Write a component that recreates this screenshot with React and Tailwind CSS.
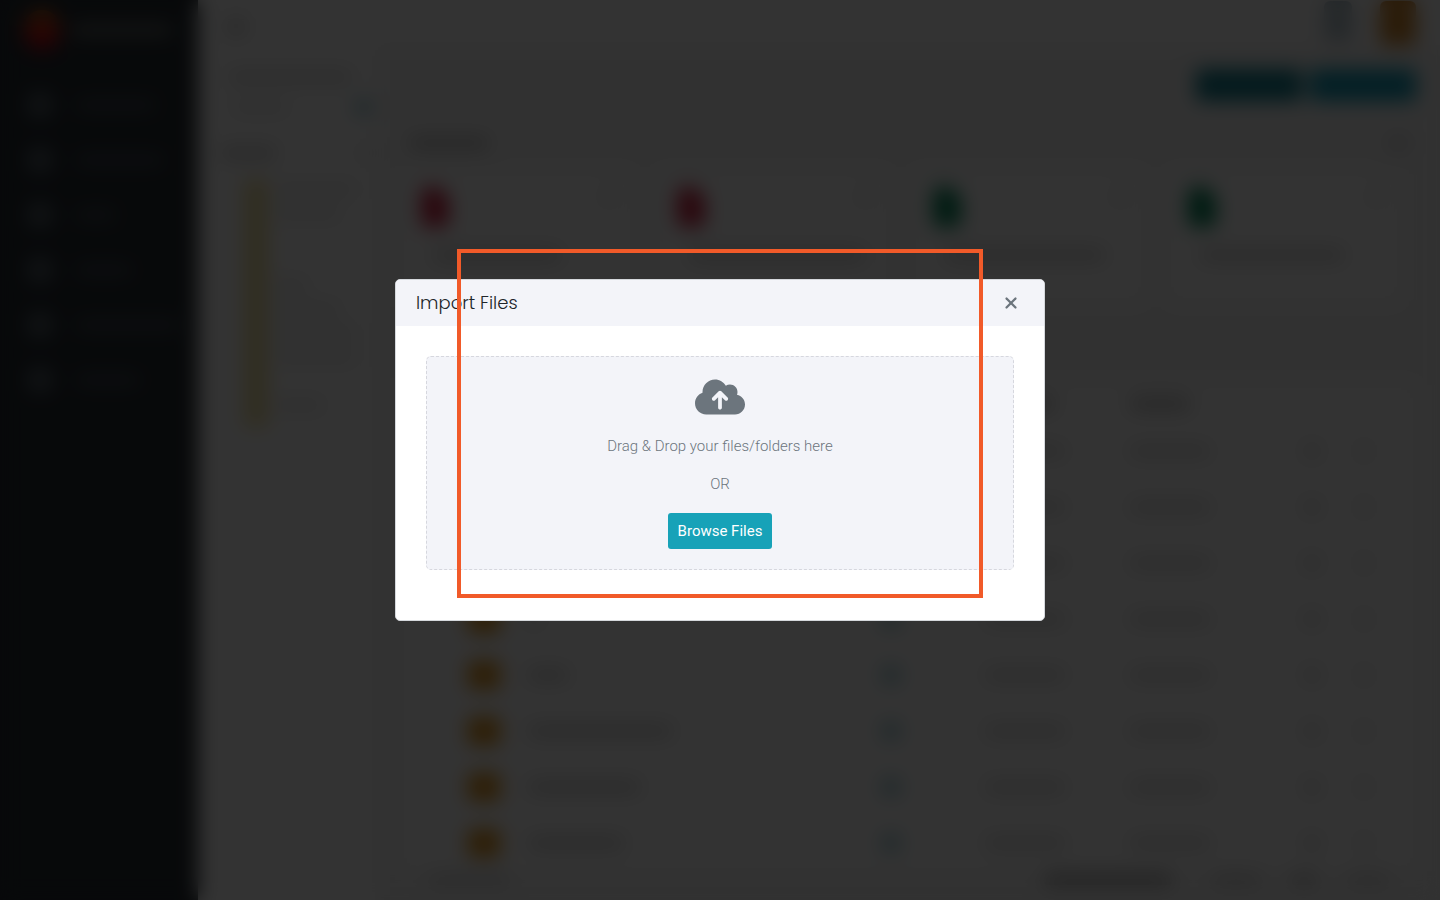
import { FaCloudArrowUp } from "react-icons/fa6";
import { X } from "lucide-react";

const menuItems = ["w-20", "w-[88px]", "w-10", "w-14", "w-[104px]", "w-16"];

const folders = [
  "w-20",
  "w-16",
  "w-0",
  "w-0",
  "w-8",
  "w-16",
  "w-20",
  "w-20",
  "w-0",
  "w-12",
];

const recentFiles = [
  { icon: "bg-[#d22343]", name: "w-32" },
  { icon: "bg-[#d22343]", name: "w-44" },
  { icon: "bg-[#00875a]", name: "w-40" },
  { icon: "bg-[#00875a]", name: "w-36" },
];

const rows = ["w-20", "w-24", "w-16", "w-3", "w-10", "w-36", "w-28", "w-24"];

// Placeholder line for content that stays behind the dialog
function Bar({ className }) {
  return <div className={`h-3 shrink-0 rounded ${className}`} />;
}

function Sidebar() {
  return (
    <aside className="w-[198px] shrink-0 bg-[#262d33]">
      <div className="flex h-[60px] items-center gap-3 pl-6">
        <div className="h-10 w-9 shrink-0 rounded-full bg-linear-to-b from-[#b86a10] via-[#d01810] to-[#c00020]" />
        <Bar className="w-[100px] bg-[#686d68]" />
      </div>
      <div className="flex flex-col gap-[31px] pt-[33px] pl-7">
        {menuItems.map((width, i) => (
          <div key={i} className="flex h-6 items-center gap-6">
            <div className="h-6 w-6 shrink-0 rounded-md bg-[#59636b]" />
            <Bar className={`${width} bg-[#444c53]`} />
          </div>
        ))}
      </div>
    </aside>
  );
}

function FolderPanel() {
  return (
    <div className="w-[177px] shrink-0 bg-white pt-[26px] pr-1 pl-[22px]">
      <Bar className="ml-2 w-[124px] bg-[#d8d8d8]" />
      <div className="mt-4 flex items-center justify-between">
        <Bar className="ml-3 w-14 bg-[#e6e6e6]" />
        <div className="h-4 w-4 rounded-full bg-[#7dbccb]" />
      </div>
      <div className="mt-8 flex items-center justify-between">
        <Bar className="w-14 bg-[#cccccc]" />
        <div className="h-3 w-3 rounded-full bg-[#d8d8d8]" />
      </div>
      <div className="mt-5 flex gap-2 pl-6">
        <div className="h-[248px] w-6 shrink-0 bg-[#f2e2a0]" />
        <div className="flex flex-col gap-3 pt-1">
          {folders.map((width, i) => (
            <Bar key={i} className={`${width} bg-[#e6e6e6]`} />
          ))}
        </div>
      </div>
    </div>
  );
}

function RecentFiles() {
  return (
    <div className="mt-6 mr-4 grid grid-cols-4 gap-6">
      {recentFiles.map((file, i) => (
        <div key={i} className="h-[128px] rounded-md bg-white px-5 pt-[14px]">
          <div className="flex justify-between">
            <div className={`h-10 w-7 rounded-md rounded-tr-2xl ${file.icon}`} />
            <div className="mt-1 h-3 w-2 bg-[#cccccc]" />
          </div>
          <Bar className={`mt-[22px] ml-3 ${file.name} bg-[#cfcfcf]`} />
        </div>
      ))}
    </div>
  );
}

function FileTable() {
  return (
    <div className="mt-[84px] bg-white">
      <table className="w-full table-fixed">
        <colgroup>
          <col className="w-[127px]" />
          <col />
          <col className="w-[104px]" />
          <col className="w-[145px]" />
          <col className="w-[174px]" />
          <col className="w-14" />
          <col className="w-[56px]" />
        </colgroup>
        <tbody>
          <tr className="h-[38px]">
            <td />
            <td><Bar className="w-12 bg-[#bcbcbc]" /></td>
            <td />
            <td><Bar className="w-[70px] bg-[#bcbcbc]" /></td>
            <td><Bar className="w-[60px] bg-[#bcbcbc]" /></td>
            <td />
            <td />
          </tr>
          {rows.map((width, i) => (
            <tr key={i} className="h-14">
              <td className="pl-[67px]">
                <div className="h-7 w-8 rounded-sm bg-[#e39418]" />
              </td>
              <td><Bar className={`${width} bg-[#cecece]`} /></td>
              <td><div className="h-5 w-5 rounded-full bg-[#98c9d4]" /></td>
              <td><Bar className="w-20 bg-[#d8d8d8]" /></td>
              <td><Bar className="w-20 bg-[#d8d8d8]" /></td>
              <td><div className="h-4 w-4 rounded-full bg-[#d4d4d4]" /></td>
              <td><div className="h-4 w-2 bg-[#d4d4d4]" /></td>
            </tr>
          ))}
        </tbody>
      </table>
    </div>
  );
}

function FileManager() {
  return (
    <div className="flex h-screen overflow-hidden bg-white" aria-hidden="true">
      <Sidebar />
      <div className="flex min-w-0 flex-1 flex-col">
        <header className="flex h-[45px] shrink-0 items-center justify-between pr-6 pl-[30px]">
          <div className="mt-2 h-4 w-4 bg-[#c8c8c8]" />
          <div className="flex gap-7">
            <div className="h-10 w-7 rounded-md bg-[#b4c6cf]" />
            <div className="h-11 w-9 rounded-md bg-[#d4882a]" />
          </div>
        </header>
        <div className="flex min-h-0 flex-1">
          <FolderPanel />
          <main className="min-w-0 flex-1 bg-[#f6f6f6] pt-6 pr-6 pl-[26px]">
            <div className="flex justify-end gap-2">
              <div className="h-8 w-[106px] rounded bg-[#0f7f90]" />
              <div className="h-8 w-[106px] rounded bg-[#109cb8]" />
            </div>
            <div className="mt-9 flex items-center justify-between px-2">
              <Bar className="w-20 bg-[#bcbcbc]" />
              <Bar className="w-5 bg-[#c8c8cc]" />
            </div>
            <RecentFiles />
            <FileTable />
            <div className="mt-0.5 flex items-center gap-8 px-7">
              <Bar className="mr-auto w-20 bg-[#d8d8d8]" />
              <Bar className="mr-2 w-32 bg-[#a8a8a8]" />
              <Bar className="w-12 bg-[#d2d2d2]" />
              <Bar className="w-6 bg-[#c4c4c4]" />
              <Bar className="w-10 bg-[#d8d8d8]" />
            </div>
          </main>
        </div>
      </div>
    </div>
  );
}

function ImportDialog() {
  return (
    <div
      role="dialog"
      aria-modal="true"
      aria-labelledby="import-title"
      className="relative w-full max-w-[650px] rounded-[5px] border border-[#d5d8dc] bg-white"
    >
      <div className="flex h-[46px] items-center justify-between rounded-t-sm bg-[#f3f4f9] px-5">
        <h1
          id="import-title"
          className="font-['Poppins','Open_Sans',sans-serif] text-lg font-light text-[#212529]"
        >
          Import Files
        </h1>
        <button type="button" aria-label="Close" className="p-1 text-[#6c757d]">
          <X size={18} strokeWidth={3} />
        </button>
      </div>

      <div className="px-[30px] pt-[30px] pb-[50px]">
        <div className="flex flex-col items-center rounded-[5px] border border-dashed border-[#d6d7de] bg-[#f3f4f9] p-5 text-[15px] leading-[22px] font-light text-[#6c757d]">
          <FaCloudArrowUp className="h-10 w-[50px]" />
          <p className="mt-[18px]">Drag &amp; Drop your files/folders here</p>
          <p className="mt-4">OR</p>
          <button
            type="button"
            className="mt-[18px] h-9 rounded-[3px] bg-[#17a2b8] px-2.5 font-normal text-white"
          >
            Browse Files
          </button>
        </div>
      </div>

      {/* highlight frame around the drop area */}
      <div className="pointer-events-none absolute inset-x-[61px] -top-[31px] bottom-[22px] border-4 border-[#f15a29]" />
    </div>
  );
}

export default function App() {
  return (
    <div className="font-['Roboto',sans-serif]">
      <FileManager />
      <div className="fixed inset-0 flex items-center justify-center bg-black/80 backdrop-blur-[10px]">
        <ImportDialog />
      </div>
    </div>
  );
}
